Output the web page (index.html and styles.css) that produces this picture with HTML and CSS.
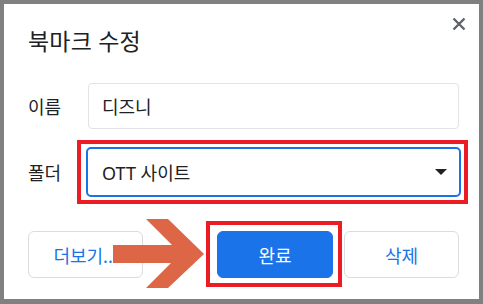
FILE: index.html
```html
<!DOCTYPE html>
<html lang="ko">
<head>
  <meta charset="UTF-8" />
  <title>북마크 수정</title>
  <link rel="stylesheet" href="styles.css">
</head>
<body>
  <div class="dialog">
    <div class="dialog-head">
      <h1>북마크 수정</h1>
      <button class="close" aria-label="닫기">
        <svg width="14" height="14" viewBox="0 0 14 14"><path d="M1.5 1.5 L12.5 12.5 M12.5 1.5 L1.5 12.5" stroke="#5f6368" stroke-width="2.4" fill="none"/></svg>
      </button>
    </div>

    <div class="row">
      <label class="label">이름</label>
      <div class="input">디즈니</div>
    </div>

    <div class="row row-folder">
      <label class="label">폴더</label>
      <div class="select mark">
        <span>OTT 사이트</span>
        <svg class="caret" width="12" height="6" viewBox="0 0 12 6"><path d="M0 0 L12 0 L6 6 Z" fill="#202124"/></svg>
      </div>
    </div>

    <div class="actions">
      <button class="btn">더보기...</button>
      <button class="btn btn-primary mark mark-btn">완료</button>
      <button class="btn">삭제</button>
    </div>

    <!-- annotation arrow -->
    <svg class="arrow" width="92" height="70" viewBox="0 0 92 70">
      <polygon points="0,26 59,26 33,0 55,0 91,35 55,69 33,69 58,44 0,44" fill="#dc6646"/>
    </svg>
  </div>
</body>
</html>
```

FILE: styles.css
```css
body {
  margin: 0;
  background: #808080;
  font-family: "Noto Sans", "Noto Sans CJK KR", sans-serif;
  color: #202124;
}

.dialog {
  position: relative;
  margin: 4px;
  width: 475px;
  height: 295px;
  box-sizing: border-box;
  background: #fff;
  padding: 22px 20px 0 24px;
}

.dialog-head {
  display: flex;
  justify-content: space-between;
  align-items: flex-start;
  height: 57px;
}
h1 {
  margin: 0;
  font-size: 23px;
  font-weight: 400;
  line-height: 30px;
  letter-spacing: 0.2px;
}
.close {
  border: none;
  background: none;
  padding: 0;
  margin: -9px -7px 0 0;
  width: 14px;
  height: 14px;
  display: flex;
}

.row {
  display: flex;
  align-items: center;
}
.row-folder {
  margin-top: 20px;
}
.label {
  width: 60px;
  font-size: 18px;
}
.input {
  flex: 1;
  height: 46px;
  box-sizing: border-box;
  border: 1px solid #e3e3e3;
  border-radius: 4px;
  padding: 0 13px;
  display: flex;
  align-items: center;
  font-size: 18px;
}
.select {
  flex: 1;
  height: 50px;
  margin: -2px -2px;
  box-sizing: border-box;
  border: 2px solid #1a73e8;
  border-radius: 5px;
  padding: 0 12px 0 14px;
  display: flex;
  align-items: center;
  justify-content: space-between;
  font-size: 18px;
}

/* red highlight boxes */
.mark {
  position: relative;
}
.mark::after {
  content: "";
  position: absolute;
  top: -9px;
  bottom: -9px;
  left: -11px;
  right: -9px;
  border: 4px solid #ec1c24;
  pointer-events: none;
}
.mark-btn::after {
  top: -11px;
  bottom: -10px;
  left: -12px;
  right: -10px;
}

.actions {
  display: flex;
  gap: 11px;
  margin-top: 36px;
}
.btn {
  width: 115px;
  height: 47px;
  border: 1px solid #dadce0;
  border-radius: 6px;
  background: #fff;
  color: #1a73e8;
  font-family: inherit;
  font-size: 18px;
  padding: 0;
}
.btn-primary {
  margin-left: auto;
  width: 116px;
  background: #1a73e8;
  border-color: #1a73e8;
  color: #fff;
}

.arrow {
  position: absolute;
  left: 109px;
  top: 215px;
}
```
